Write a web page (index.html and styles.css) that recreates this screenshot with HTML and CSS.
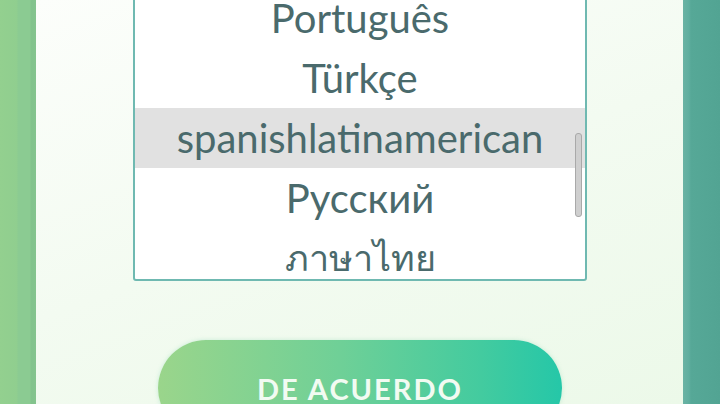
FILE: index.html
```html
<!DOCTYPE html>
<html lang="es">
<head>
  <meta charset="UTF-8">
  <title>Idioma</title>
  <link rel="stylesheet" href="styles.css">
</head>
<body>
  <div class="edge edge-left"></div>

  <div class="panel">
    <div class="listbox">
      <div class="option">Português</div>
      <div class="option">Türkçe</div>
      <div class="option selected">spanishlatinamerican</div>
      <div class="option">Русский</div>
      <div class="option thai">ภาษาไทย</div>
      <div class="scroll-thumb"></div>
    </div>

    <button class="confirm">DE ACUERDO</button>
  </div>

  <div class="edge edge-right"></div>
</body>
</html>
```

FILE: styles.css
```css
html, body { margin: 0; height: 100%; overflow: hidden; }
body {
  display: flex;
  font-family: Lato, "Noto Sans", sans-serif;
  background: #eef9ec;
}

.edge { flex: none; height: 100%; }
.edge-left {
  width: 36px;
  background: linear-gradient(90deg, #93d08f 0, #90ce8f 17px, #8bcb92 18px, #8bcb92 30px, #82c38c 31px, #84c48e 36px);
}
.edge-right {
  width: 37px;
  background: linear-gradient(90deg, #6ab3a4 0, #60ae9f 6px, #56a897 8px, #52a493 37px);
}

.panel {
  flex: 1;
  display: flex;
  flex-direction: column;
  align-items: center;
  background: linear-gradient(160deg, #fcfefb 0%, #f3fbf1 50%, #ecf9e9 100%);
}

.listbox {
  flex: none;
  position: relative;
  box-sizing: border-box;
  width: 454px;
  height: 295px;
  margin-top: -14px;
  margin-left: 1px;
  border: 2px solid #6fb9b1;
  border-radius: 3px;
  background: #fff;
  overflow: hidden;
}

.option {
  height: 60px;
  line-height: 60px;
  text-align: center;
  font-size: 40px;
  color: #4a6a6c;
  white-space: nowrap;
}
.option.selected { background: #e1e1e1; }
.option.thai { font-family: "Noto Sans", "DejaVu Sans", sans-serif; font-size: 36px; }

.scroll-thumb {
  position: absolute;
  top: 145px;
  right: 3px;
  width: 5px;
  height: 82px;
  border-radius: 3px;
  background: #cfcfcf;
  border: 1px solid #a9a9a9;
}

.confirm {
  flex: none;
  width: 404px;
  height: 96px;
  margin-top: 59px;
  margin-left: 1px;
  border: none;
  border-radius: 48px;
  background: linear-gradient(90deg, #9ad58b 0%, #6fd097 45%, #43cb9f 80%, #25c7a8 100%);
  box-shadow: 0 0 4px rgba(120, 210, 170, 0.35);
  color: #f2fbf2;
  font-family: Lato, sans-serif;
  font-weight: 700;
  font-size: 29px;
  letter-spacing: 2px;
  padding: 0;
}
```
